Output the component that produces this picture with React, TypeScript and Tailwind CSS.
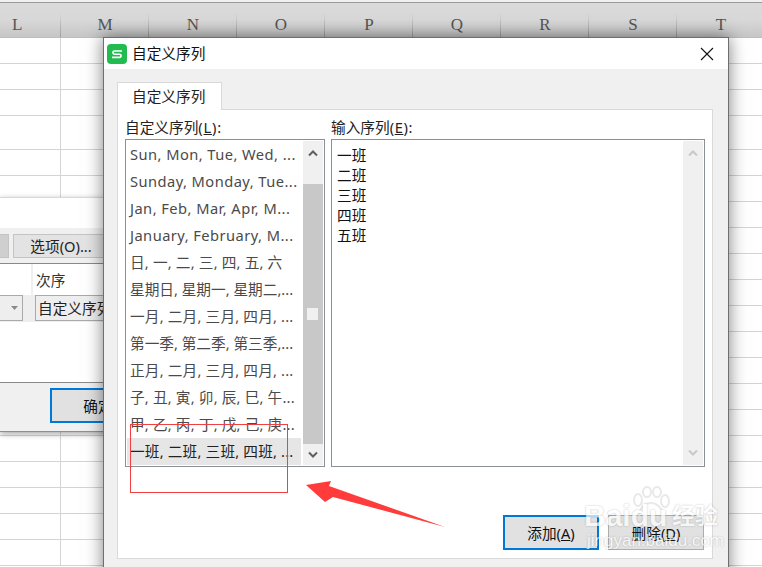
import React from "react";

const cols = ["M", "N", "O", "P", "Q", "R", "S", "T"];
const rowHeights = ["h-[26px]", "h-[26px]", "h-[26px]", "h-[34px]", ...Array(16).fill("h-[26px]")];
const items = [
  "Sun, Mon, Tue, Wed, ...",
  "Sunday, Monday, Tue...",
  "Jan, Feb, Mar, Apr, M...",
  "January, February, M...",
  "日, 一, 二, 三, 四, 五, 六",
  "星期日, 星期一, 星期二,...",
  "一月, 二月, 三月, 四月, ...",
  "第一季, 第二季, 第三季,...",
  "正月, 二月, 三月, 四月, ...",
  "子, 丑, 寅, 卯, 辰, 巳, 午...",
  "甲, 乙, 丙, 丁, 戊, 己, 庚...",
  "一班, 二班, 三班, 四班, ...",
];
const entries = ["一班", "二班", "三班", "四班", "五班"];

function Chevron({ up, color }: { up?: boolean; color: string }) {
  return (
    <svg width="12" height="8" viewBox="0 0 12 8" fill="none" stroke={color} strokeWidth="2">
      <path d={up ? "M2 6.5 L6 2.5 L10 6.5" : "M2 1.5 L6 5.5 L10 1.5"} />
    </svg>
  );
}

export default function App() {
  return (
    <div className="relative w-[762px] h-[567px] overflow-hidden bg-white font-['Noto_Sans','Noto_Sans_CJK_SC',sans-serif]">
      {/* Spreadsheet */}
      <div className="h-[2px] bg-[#f0f0f0]" />
      <div className="h-[1px] bg-[#9a9a9a]" />
      <div className="flex h-[35px] border-b border-[#bdbdbd] bg-gradient-to-b from-[#dadada] via-[#d8d8d8] to-[#c6c6c6] font-['Liberation_Serif',serif] text-[17px] text-[#555]">
        <div className="relative flex w-[61px] shrink-0 items-end pb-[1px] pl-[12px] leading-[22px]">
          L
          <div className="absolute right-0 top-[10px] bottom-0 w-px bg-gradient-to-b from-[#d8d8d8] to-[#9c9c9c]" />
        </div>
        {cols.map((c) => (
          <div key={c} className="relative flex w-[88px] shrink-0 items-end justify-center pb-[1px] leading-[22px]">
            {c}
            <div className="absolute right-0 top-[10px] bottom-0 w-px bg-gradient-to-b from-[#d8d8d8] to-[#9c9c9c]" />
          </div>
        ))}
      </div>
      <div>
        {rowHeights.map((h, i) => (
          <div key={i} className={`flex ${h} border-b border-[#d4d4d4]`}>
            <div className="w-[61px] shrink-0 border-r border-[#d4d4d4]" />
          </div>
        ))}
      </div>

      {/* Sort dialog behind */}
      <div className="absolute left-0 top-[197px] flex h-[235px] w-[200px] flex-col border-t border-b border-t-[#d8d8d8] border-b-[#8f8f8f] bg-white shadow-[0_2px_6px_rgba(0,0,0,0.35)]">
        <div className="h-[30px] shrink-0" />
        <div className="flex h-[36px] shrink-0 items-center gap-[4px] border-b border-[#8a8794] bg-[#f0f0f0]">
          <div className="-ml-[87px] h-[24px] w-[96px] border border-[#c4c4c4] bg-[#cfcfcf]" />
          <div className="flex h-[24px] w-[96px] items-center justify-center border border-[#c4c4c4] bg-[#e3e3e3] text-[14.67px] leading-[20px] text-[#222]">
            选项(O)...
          </div>
        </div>
        <div className="flex h-[31px] shrink-0">
          <div className="w-[33px] border-r-2 border-[#f0f0f0]" />
          <div className="flex items-center pl-[3px] text-[14.67px] leading-[20px] text-[#333]">次序</div>
        </div>
        <div className="flex h-[27px] shrink-0 bg-[#eeeeee]">
          <div className="flex h-[26px] w-[23px] shrink-0 items-center justify-end border border-l-0 border-[#aaaaaa] pr-[4px]">
            <svg width="7" height="4" viewBox="0 0 7 4"><path d="M0 0H7L3.5 4Z" fill="#8a8a8a" /></svg>
          </div>
          <div className="ml-[12px] flex h-[26px] w-[110px] shrink-0 items-center whitespace-nowrap border border-[#aaaaaa] pl-[2px] text-[14.67px] leading-[20px] text-[#222]">
            自定义序列
          </div>
        </div>
        <div className="h-[61px] shrink-0 border-b border-[#8a8a8a]" />
        <div className="flex flex-1 items-start bg-[#f0f0f0] pl-[50px] pt-[5px]">
          <div className="flex h-[35px] w-[96px] items-center justify-center border-2 border-[#0078d7] bg-[#e1e1e1] text-[14.67px] leading-[20px] text-[#111]">
            确定
          </div>
        </div>
      </div>

      {/* Main dialog */}
      <div className="absolute left-[103px] top-[37px] flex h-[545px] w-[626px] flex-col border border-[#6e6e6e] bg-[#f0f0f0] shadow-[0_0_16px_rgba(0,0,0,0.5)]">
        <div className="flex h-[31px] shrink-0 items-center bg-white pl-[3px] pr-[14px]">
          <svg width="20" height="20" viewBox="0 0 20 20" className="shrink-0">
            <rect width="20" height="20" rx="4" fill="#22bb4f" />
            <path d="M15 7H7.5a1.6 1.6 0 0 0 0 3.2h5a1.6 1.6 0 0 1 0 3.2H5" fill="none" stroke="#fff" strokeWidth="1.6" />
          </svg>
          <span className="mb-[2px] ml-[5px] text-[14.67px] leading-[20px] text-[#111]">自定义序列</span>
          <svg width="14" height="14" viewBox="0 0 14 14" className="ml-auto" stroke="#111" strokeWidth="1.1">
            <path d="M1 1L13 13M13 1L1 13" />
          </svg>
        </div>
        <div className="flex flex-1 flex-col pl-[13px] pr-[15px] pt-[13px]">
          <div className="relative z-10 -mb-px flex h-[28px] w-[105px] items-center border border-b-0 border-[#d9d9d9] bg-white pb-[2px] pl-[14px] text-[14.67px] leading-[20px] text-[#222]">
            自定义序列
          </div>
          <div className="flex h-[450px] flex-col border border-[#d9d9d9] bg-white px-[7px]">
            <div className="flex h-[29px] shrink-0 gap-[6px] pt-[7px] text-[14.67px] leading-[20px] text-[#222]">
              <div className="w-[200px]">自定义序列<span className="tracking-[0.8px]">(<span className="underline">L</span>):</span></div>
              <div>输入序列<span className="tracking-[0.6px]">(<span className="underline">E</span>):</span></div>
            </div>
            <div className="flex h-[328px] shrink-0 gap-[6px]">
              {/* Left list */}
              <div className="flex h-full w-[200px] border border-[#8a9095] p-[1px]">
                <div className="flex w-[176px] shrink-0 flex-col">
                  {items.map((t, i) => (
                    <div
                      key={t}
                      className={`flex h-[27px] shrink-0 items-center whitespace-nowrap pb-[2px] pl-[3px] text-[14.67px] leading-[20px] ${
                        i < 4 ? "tracking-[0.45px]" : i === 5 || i === 7 ? "" : "tracking-[0.18px]"
                      } ${i === 11 ? "mr-[2px] bg-[#e6e6e6] text-[#222]" : "text-[#4a4a4a]"}`}
                    >
                      {t}
                    </div>
                  ))}
                </div>
                <div className="flex w-[20px] shrink-0 flex-col bg-[#f0f0f0]">
                  <div className="flex h-[43px] shrink-0 items-start justify-center pt-[8px]">
                    <Chevron up color="#606060" />
                  </div>
                  <div className="relative h-[260px] shrink-0 bg-[#c8c8c8]">
                    <div className="absolute left-[4px] top-[124px] h-[12px] w-[11px] bg-[#f0f0f0]" />
                  </div>
                  <div className="flex flex-1 items-center justify-center">
                    <Chevron color="#606060" />
                  </div>
                </div>
              </div>
              {/* Right list */}
              <div className="flex h-full w-[374px] border border-[#8a9095] p-[1px]">
                <div className="flex-1 pl-[4px] pt-[4px] text-[14.67px] leading-[20px] text-[#111]">
                  {entries.map((e) => (
                    <div key={e}>{e}</div>
                  ))}
                </div>
                <div className="flex w-[20px] shrink-0 flex-col items-center justify-between bg-[#f0f0f0] py-[8px]">
                  <Chevron up color="#c8c8c8" />
                  <Chevron color="#c8c8c8" />
                </div>
              </div>
            </div>
            <div className="flex flex-1 items-start justify-end gap-[9px] pr-[1px] pt-[48px] text-[14.67px] leading-[20px] text-[#111]">
              <div className="flex h-[35px] w-[96px] items-center justify-center border-2 border-[#0078d7] bg-[#e1e1e1]">
                添加(<span className="underline">A</span>)
              </div>
              <div className="flex h-[35px] w-[96px] items-center justify-center border border-[#adadad] bg-[#e1e1e1]">
                删除(<span className="underline">D</span>)
              </div>
            </div>
          </div>
        </div>
      </div>

      {/* Annotations */}
      <div className="absolute left-[130px] top-[424px] h-[69px] w-[158px] border border-[#f04040]" />
      <svg className="absolute left-[300px] top-[478px]" width="150" height="52" viewBox="0 0 150 52">
        <path d="M6 7 L31 3 L29 8 L145 49 L33 19 L25 24 Z" fill="#ff3b3b" />
      </svg>

      {/* Watermark */}
      <div className="pointer-events-none absolute left-[584px] top-[486px] h-[66px] w-[140px] text-white opacity-70 [text-shadow:0_0_2px_rgba(0,0,0,0.35)]">
        <svg className="absolute left-[46px] top-0" width="42" height="36" viewBox="0 0 42 36" fill="none" stroke="#e0e0e0" strokeWidth="2">
          <ellipse cx="8" cy="14" rx="4" ry="6" />
          <ellipse cx="17" cy="6" rx="4" ry="5" />
          <ellipse cx="27" cy="6" rx="4" ry="5" />
          <ellipse cx="35" cy="15" rx="4" ry="6" />
          <path d="M21 17c-6 0-12 6-12 12 0 5 6 5 12 4 6 1 12 1 12-4 0-6-6-12-12-12Z" />
        </svg>
        <div className="absolute left-0 top-[15px] whitespace-nowrap font-['Liberation_Sans',sans-serif] text-[30px] font-bold leading-[30px]">Baidu</div>
        <div className="absolute left-[88px] top-[13px] whitespace-nowrap font-['Noto_Sans_CJK_SC',sans-serif] text-[23px] font-bold leading-[30px]">经验</div>
        <div className="absolute left-[3px] top-[45px] whitespace-nowrap font-['Liberation_Sans',sans-serif] text-[17px] leading-[20px]">jingyan.baidu.com</div>
      </div>
    </div>
  );
}
